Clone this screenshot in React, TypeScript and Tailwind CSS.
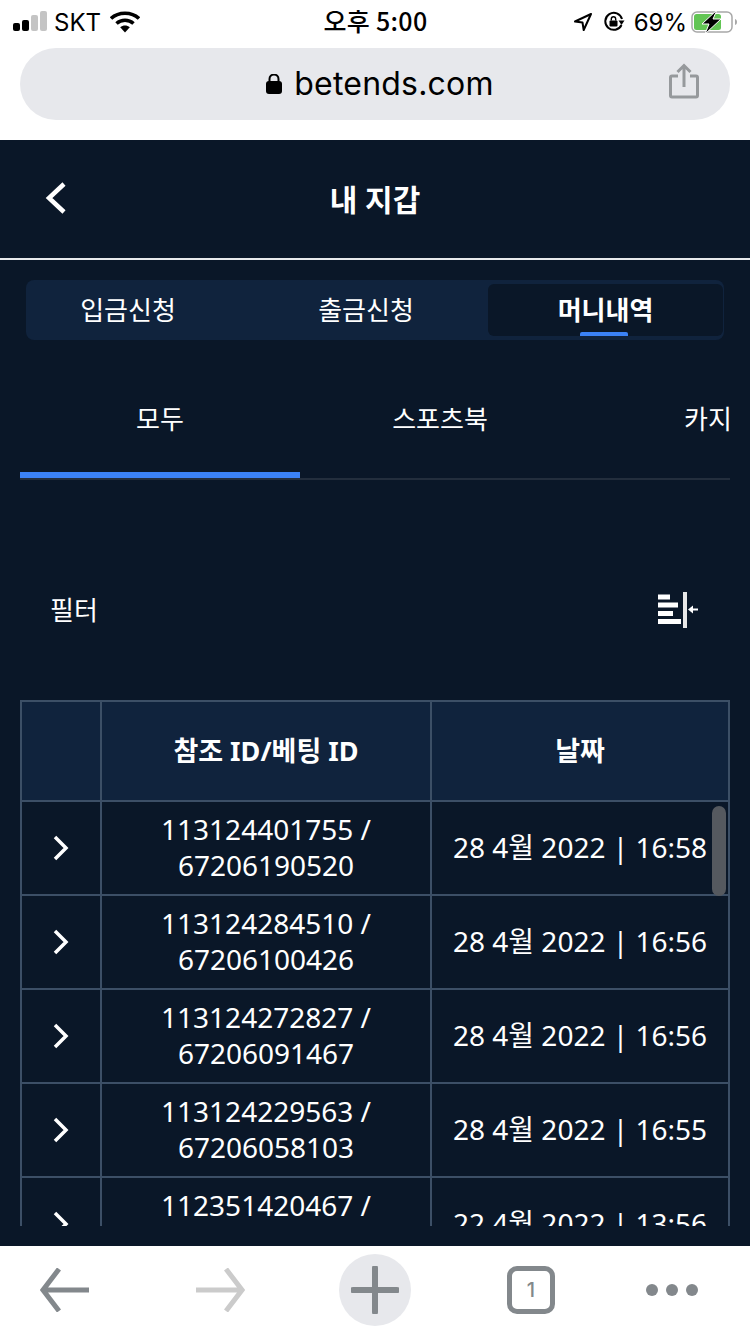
import React from "react";

const rows = [
  ["113124401755 /", "67206190520", "28 4월 2022 | 16:58"],
  ["113124284510 /", "67206100426", "28 4월 2022 | 16:56"],
  ["113124272827 /", "67206091467", "28 4월 2022 | 16:56"],
  ["113124229563 /", "67206058103", "28 4월 2022 | 16:55"],
  ["112351420467 /", "\u00a0", "22 4월 2022 | 13:56"],
];

const StatusBar = () => (
  <div className="h-[48px] pb-[4px] flex items-center justify-between pl-[13px] pr-[12px] text-black text-[24px] font-['Inter',sans-serif]">
    <div className="flex items-center w-[240px]">
      <div className="flex items-end gap-[2px] h-[20px] pb-[1px]">
        <span className="w-[7px] h-[8px] rounded-[2px] bg-black" />
        <span className="w-[7px] h-[11px] rounded-[2px] bg-black" />
        <span className="w-[7px] h-[16px] rounded-[2px] bg-[#c4c4c4]" />
        <span className="w-[7px] h-[20px] rounded-[2px] bg-[#c4c4c4]" />
      </div>
      <span className="ml-[7px] mt-[2px] leading-none">SKT</span>
      <svg className="ml-[9px]" width="30" height="22" viewBox="0 0 30 22">
        <path d="M1 7.500C8.500 .5 21.500 .5 29 7.500" fill="none" stroke="#000" strokeWidth="3.600" />
        <path d="M6.500 12.500c4.800-4.300 12.200-4.300 17 0" fill="none" stroke="#000" strokeWidth="3.600" />
        <path d="M10.200 16.200c2.800-2.200 6.800-2.200 9.600 0L15 21.500z" fill="#000" />
      </svg>
    </div>
    <span className="mb-[4px] font-['Noto_Sans_CJK_KR',sans-serif] text-[25px] font-medium leading-none tracking-[0.3px]">오후 5:00</span>
    <div className="flex items-center justify-end w-[240px]">
      <svg width="20" height="20" viewBox="0 0 20 20">
        <path d="M18 2 2 9.500l7.500 1 1.200 7.500z" fill="none" stroke="#000" strokeWidth="2" strokeLinejoin="round" />
      </svg>
      <svg className="ml-[10px]" width="22" height="22" viewBox="0 0 22 22">
        <path d="M18.500 14A8.500 8.500 0 1 1 19 8" fill="none" stroke="#000" strokeWidth="2" />
        <path d="M15.500 9.500h6L18.500 14z" fill="#000" />
        <rect x="6.500" y="9.500" width="8" height="6" rx="1" fill="#000" />
        <path d="M8.300 9.500V8a2.200 2.200 0 0 1 4.400 0v1.500" fill="none" stroke="#000" strokeWidth="1.400" />
      </svg>
      <span className="ml-[9px] mt-[2px] leading-none">69%</span>
      <svg className="ml-[4px]" width="47" height="24" viewBox="0 0 47 24">
        <rect x="1" y="2" width="40" height="20" rx="5" fill="none" stroke="#a8a8a8" strokeWidth="1.500" />
        <rect x="3" y="4" width="27" height="16" rx="2.500" fill="#62c554" />
        <path d="M44 9c1.500.5 2 1.500 2 3s-.5 2.500-2 3z" fill="#a8a8a8" />
        <path d="M26 0 11 14h7l-4 10 16-15h-8z" fill="#000" stroke="#fff" strokeWidth="1" />
      </svg>
    </div>
  </div>
);

const UrlBar = () => (
  <div className="h-[92px] px-[20px]">
    <div className="relative h-[72px] rounded-[36px] bg-[#e7e8ec] flex items-center justify-center pl-[10px]">
      <div className="flex items-center">
        <svg width="16" height="20" viewBox="0 0 16 20">
          <rect x="0" y="7" width="16" height="13" rx="3" fill="#000" />
          <path d="M3.500 8V5a4.500 4.500 0 0 1 9 0v3" fill="none" stroke="#000" strokeWidth="2" />
        </svg>
        <span className="ml-[12px] text-[32px] tracking-[0.2px] leading-none text-black font-['Inter',sans-serif]">betends.com</span>
      </div>
      <svg className="absolute right-[31px] top-[15px]" width="30" height="36" viewBox="0 0 30 36">
        <path d="M9 13H3a1.500 1.500 0 0 0-1.500 1.500v18A1.500 1.500 0 0 0 3 34h24a1.500 1.500 0 0 0 1.500-1.500v-18A1.500 1.500 0 0 0 27 13h-6" fill="none" stroke="#96999c" strokeWidth="3" />
        <path d="M15 24V3M8.500 9 15 2.500 21.500 9" fill="none" stroke="#96999c" strokeWidth="3" />
      </svg>
    </div>
  </div>
);

const FilterIcon = () => (
  <svg width="42" height="36" viewBox="0 0 42 36">
    <rect x="0" y="2.500" width="12" height="5" fill="#fff" />
    <rect x="0" y="10.500" width="20" height="5" fill="#fff" />
    <rect x="0" y="19" width="15" height="5" fill="#fff" />
    <rect x="0" y="27" width="23" height="5" fill="#fff" />
    <rect x="25" y="0" width="4" height="36" fill="#e8e8e8" />
    <path d="M40 17.500h-7" stroke="#fff" strokeWidth="2" />
    <path d="m30 17.500 5-4v8z" fill="#fff" />
  </svg>
);

const RowChevron = () => (
  <svg width="18" height="26" viewBox="0 0 18 26">
    <path d="M3 2l11 11L3 24" fill="none" stroke="#fff" strokeWidth="3.500" />
  </svg>
);

const Table = () => (
  <div className="relative mx-[20px] h-[526px] overflow-hidden">
    <div className="grid grid-cols-[80px_330px_1fr] h-[102px] bg-[#10233d] border-2 border-[#3c4f66] text-white text-[27px] font-bold">
      <div className="border-r-2 border-[#3c4f66]" />
      <div className="border-r-2 border-[#3c4f66] flex items-center justify-center">참조 ID/베팅 ID</div>
      <div className="flex items-center justify-center">날짜</div>
    </div>
    {rows.map((row, i) => (
      <div key={i} className="grid grid-cols-[80px_330px_1fr] h-[94px] border-x-2 border-b-2 border-[#3c4f66] text-white text-[28px] leading-[36px]">
        <div className="border-r-2 border-[#3c4f66] flex items-center justify-center">
          <RowChevron />
        </div>
        <div className="border-r-2 border-[#3c4f66] flex flex-col items-center justify-center pb-[2px]">
          <span>{row[0]}</span>
          <span>{row[1]}</span>
        </div>
        <div className="flex items-center justify-center whitespace-nowrap pb-[2px]">{row[2]}</div>
      </div>
    ))}
    <div className="absolute left-[692px] top-[106px] w-[14px] h-[90px] rounded-[7px] bg-[#55595f]" />
  </div>
);

const BottomBar = () => (
  <div className="h-[88px] bg-white flex items-center pl-[40px]">
    <svg width="50" height="44" viewBox="0 0 50 44">
      <path d="M49 22H5M19 1 3 22l16 21" fill="none" stroke="#83888c" strokeWidth="5" />
    </svg>
    <svg className="ml-[105px]" width="50" height="44" viewBox="0 0 50 44">
      <path d="M1 22h44M31 1l16 21-16 21" fill="none" stroke="#cbcbcb" strokeWidth="5" />
    </svg>
    <div className="ml-[94px] w-[72px] h-[72px] rounded-full bg-[#e7e8ec] flex items-center justify-center">
      <svg width="48" height="48" viewBox="0 0 48 48">
        <path d="M24 2v44M2 24h44" fill="none" stroke="#83888c" strokeWidth="6" strokeLinecap="round" />
      </svg>
    </div>
    <div className="ml-[96px] w-[48px] h-[48px] rounded-[10px] border-[5px] border-[#83888c] flex items-center justify-center text-[#83888c] text-[20px] font-medium font-['Inter',sans-serif]">1</div>
    <div className="ml-[91px] flex gap-[8px]">
      <span className="w-[12px] h-[12px] rounded-full bg-[#83888c]" />
      <span className="w-[12px] h-[12px] rounded-full bg-[#83888c]" />
      <span className="w-[12px] h-[12px] rounded-full bg-[#83888c]" />
    </div>
  </div>
);

const App = () => (
  <div className="w-[750px] h-[1334px] flex flex-col overflow-hidden bg-white font-['Noto_Sans','Noto_Sans_CJK_KR',sans-serif]">
    <StatusBar />
    <UrlBar />
    <main className="flex-1 bg-[#0a1728] text-white overflow-hidden">
      {/* HEADER */}
      <div className="relative h-[120px] border-b-2 border-[#e8eaec] flex items-center justify-center">
        <svg className="absolute left-[44px] top-[42px]" width="24" height="32" viewBox="0 0 24 32">
          <path d="M20 2 5 16l15 14" fill="none" stroke="#fff" strokeWidth="4.500" />
        </svg>
        <span className="text-[30px] font-bold">내 지갑</span>
      </div>
      {/* WALLET TABS */}
      <div className="mx-[26px] mt-[20px] h-[60px] rounded-[8px] bg-[#10233d] flex p-[4px] pr-[1px] text-[26px]">
        <div className="w-[196px] flex items-center justify-center">입금신청</div>
        <div className="ml-[24px] w-[232px] flex items-center justify-center">출금신청</div>
        <div className="relative ml-[6px] flex-1 rounded-[6px] bg-[#0a1728] flex items-center justify-center font-bold">
          머니내역
          <span className="absolute bottom-0 left-[92px] w-[48px] h-[4px] rounded-t-[2px] bg-[#3b82f6]" />
        </div>
      </div>
      {/* SUB TABS */}
      <div className="mx-[20px] mt-[38px] h-[102px] border-b-2 border-[#232e3d] overflow-hidden flex text-[26px]">
        <div className="relative w-[280px] h-[100px] shrink-0 flex justify-center pt-[22px]">
          모두
          <span className="absolute left-0 bottom-0 w-[280px] h-[6px] bg-[#3b82f6]" />
        </div>
        <div className="w-[280px] shrink-0 flex justify-center pt-[22px]">스포츠북</div>
        <div className="w-[280px] shrink-0 flex justify-center pt-[22px]">카지노</div>
      </div>
      {/* FILTER */}
      <div className="mt-[100px] mx-[20px] h-[60px] flex items-center justify-between pl-[30px] pr-[30px] text-[26px]">
        <span>필터</span>
        <FilterIcon />
      </div>
      <div className="h-[60px]" />
      <Table />
    </main>
    <BottomBar />
  </div>
);

export default App;
